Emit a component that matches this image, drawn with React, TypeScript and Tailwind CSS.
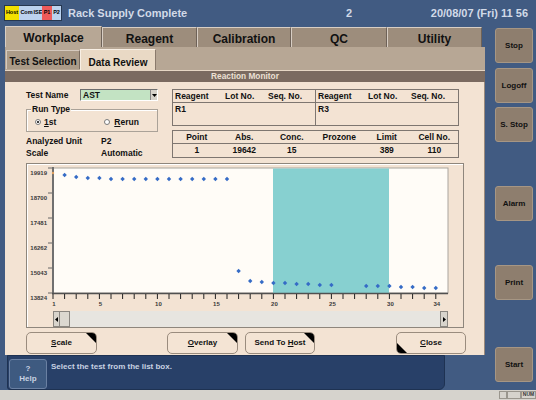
const POINTS: [number, number][] = [
  [2, 175], [3, 177], [4, 178], [5, 178], [6, 179], [7, 179], [8, 179], [9, 179], [10, 179],
  [11, 179], [12, 179], [13, 179], [14, 179], [15, 179], [16, 179],
  [17, 271], [18, 281], [19, 282], [20, 283], [21, 283], [22, 284], [23, 284], [24, 285], [25, 285],
  [28, 286], [29, 286], [30, 286], [31, 287], [32, 287], [33, 288], [34, 288],
];

const Y_TICKS: [string, number][] = [
  ["19919", 4], ["18700", 29], ["17481", 54], ["16262", 79], ["15043", 104], ["13824", 129],
];

const X_LABELS = [1, 5, 10, 15, 20, 25, 30, 34];

const TABS = [
  { label: "Workplace", w: "w-[97px]", active: true },
  { label: "Reagent", w: "w-[95px]", active: false },
  { label: "Calibration", w: "w-[94px]", active: false },
  { label: "QC", w: "w-[96px]", active: false },
  { label: "Utility", w: "w-[95px]", active: false },
];

function Chart() {
  const x = (n: number) => 26 + (n - 1) * 11.6;
  return (
    <svg width="436" height="146" className="block">
      <rect x="26" y="4" width="395" height="125" fill="#fffcf7" stroke="#aaa59e" strokeWidth="1" />
      <rect x="246" y="4.5" width="116" height="124.5" fill="#87d0d0" />
      <line x1="26" y1="3" x2="26" y2="130" stroke="#707070" strokeWidth="2" />
      <line x1="25" y1="129.5" x2="421" y2="129.5" stroke="#505050" strokeWidth="1.5" />
      {Y_TICKS.map(([l, y]) => (
        <g key={l}>
          <line x1="21" x2="25" y1={y} y2={y} stroke="#666" strokeWidth="1" />
          <text x="20" y={y + 7} textAnchor="end" fontSize="6" fill="#3a3a3a" fontFamily="Liberation Sans, Arial, sans-serif">
            {l}
          </text>
        </g>
      ))}
      {Array.from({ length: 34 }, (_, i) => (
        <line key={i} x1={x(i + 1)} x2={x(i + 1)} y1="130" y2="135" stroke="#222" strokeWidth="1" />
      ))}
      {X_LABELS.map((n) => (
        <text key={n} x={x(n) + 1} y="142" textAnchor="middle" fontSize="6" fill="#3a3a3a" fontFamily="Liberation Sans, Arial, sans-serif">
          {n}
        </text>
      ))}
      <circle cx="26" cy="9" r="1.2" fill="#e0a060" />
      {POINTS.map(([n, ay]) => {
        const cx = x(n);
        const cy = ay - 164;
        return (
          <path
            key={n}
            d={`M${cx} ${cy - 2.2}L${cx + 2.2} ${cy}L${cx} ${cy + 2.2}L${cx - 2.2} ${cy}Z`}
            fill="#356bc6"
          />
        );
      })}
    </svg>
  );
}

function Triangle({ corner }: { corner: "tr" | "bl" }) {
  return corner === "tr" ? (
    <svg width="10" height="10" className="absolute top-0 right-0">
      <polygon points="0,0 10,0 10,10" fill="#000" />
    </svg>
  ) : (
    <svg width="10" height="10" className="absolute bottom-0 left-0">
      <polygon points="0,0 0,10 10,10" fill="#000" />
    </svg>
  );
}

function PanelBtn({
  pre,
  u,
  post,
  w,
  corner,
  className,
}: {
  pre: string;
  u: string;
  post: string;
  w: string;
  corner: "tr" | "bl";
  className?: string;
}) {
  return (
    <div
      className={`relative overflow-hidden h-[22px] ${w} rounded-[5px] border border-[#9a8c7e] bg-[#f4e4d4] flex items-center justify-center text-[8px] font-bold text-[#111] ${className ?? ""}`}
    >
      <span>
        {pre}
        <span className="underline">{u}</span>
        {post}
      </span>
      <Triangle corner={corner} />
    </div>
  );
}

function SideBtn({ label, className }: { label: string; className: string }) {
  return (
    <div
      className={`h-[35px] w-[38px] rounded-[3px] border border-[#a69684] bg-[#8e7e6e] flex items-center justify-center text-[8px] font-bold text-[#111] ${className}`}
    >
      {label}
    </div>
  );
}

function Radio({ checked }: { checked?: boolean }) {
  return (
    <span className="w-[6px] h-[6px] rounded-full bg-white border border-[#7a7a7a] flex items-center justify-center">
      {checked && <span className="w-[2px] h-[2px] rounded-full bg-black" />}
    </span>
  );
}

export default function App() {
  return (
    <div className="w-[536px] h-[400px] overflow-hidden bg-[#415b82] flex flex-col font-['Liberation_Sans',Arial,sans-serif] text-[#111]">
      {/* Title bar */}
      <div className="h-[26px] shrink-0 flex items-center">
        <div className="ml-[4px] flex h-[16px] border border-[#26374f] text-[5.5px] font-bold leading-none text-black">
          <span className="w-[14px] bg-[#f2e000] flex items-center justify-center">Host</span>
          <span className="w-[15px] bg-[#bcd2ee] flex items-center justify-center">Com</span>
          <span className="w-[8px] bg-[#bcd2ee] flex items-center justify-center">ISE</span>
          <span className="w-[10px] bg-[#ee5a5a] flex items-center justify-center">P1</span>
          <span className="w-[9px] bg-[#bcd2ee] flex items-center justify-center">P2</span>
        </div>
        <span className="ml-[6px] w-[278px] text-[11px] font-bold text-[#d2dae8]">Rack Supply Complete</span>
        <span className="text-[11px] font-bold text-[#d2dae8]">2</span>
        <span className="ml-auto mr-[8px] text-[11px] font-bold text-[#d2dae8]">20/08/07 (Fri) 11 56</span>
      </div>

      <div className="flex-1 flex min-h-0">
        {/* Main column */}
        <div className="ml-[5px] w-[480px] flex flex-col">
          {/* Top tabs */}
          <div className="h-[21px] flex items-end">
            {TABS.map((t) => (
              <div
                key={t.label}
                className={`${t.w} flex items-center justify-center pt-[2px] text-[12px] font-bold text-[#111] border-t border-l border-[#d8cec4] border-r-[#6e6258] border-r ${
                  t.active ? "h-[21px] bg-[#b7a795]" : "h-[20px] bg-[#9d8d7c]"
                }`}
              >
                {t.label}
              </div>
            ))}
          </div>

          {/* Sub tabs */}
          <div className="h-[23px] bg-[#b7a795] flex items-end pl-[1px]">
            <div className="w-[74px] h-[19px] mb-[1px] bg-[#ab9b88] border-t border-l border-[#d6cabe] border-r border-r-[#7a6c60] flex items-center justify-center pt-[3px] text-[10px] font-bold">
              Test Selection
            </div>
            <div className="w-[76px] h-[21px] bg-[#e9d9c5] border-t border-l border-[#f8efe4] border-r border-r-[#8a7a6c] flex items-center justify-center pt-[4px] text-[10px] font-bold">
              Data Review
            </div>
          </div>

          {/* Reaction Monitor strip */}
          <div className="h-[12px] border-t border-[#e6d6c4] bg-[#7a6a60] flex items-center justify-center text-[8.3px] font-bold text-[#ece0d4] leading-none">
            Reaction Monitor
          </div>

          {/* Panel */}
          <div className="h-[273px] bg-[#f3e3d3] border-r border-[#9a8a7c] pl-[21px] pt-[7px] text-[8.5px] font-bold leading-none">
            <div className="flex h-[70px]">
              {/* Left column */}
              <div className="w-[132px] flex flex-col">
                <div className="h-[12px] flex items-center">
                  <span className="w-[54px]">Test Name</span>
                  <div className="w-[78px] h-[12px] flex bg-[#c3e3c3] border-t border-l border-[#6e6e6e] border-b border-r border-b-[#fff] border-r-[#fff]">
                    <span className="flex-1 pl-[2px] flex items-center">AST</span>
                    <span className="w-[7px] bg-[#d6d2ca] border-l border-[#888] flex items-center justify-center">
                      <svg width="5" height="3">
                        <polygon points="0,0 5,0 2.5,3" fill="#000" />
                      </svg>
                    </span>
                  </div>
                </div>
                <div className="relative mt-[8px] h-[23px] border border-[#aaa298] shadow-[inset_1px_1px_0_#fff]">
                  <span className="absolute -top-[5px] left-[4px] bg-[#f3e3d3] px-[1px] text-[8.5px]">Run Type</span>
                  <div className="pt-[7px] pl-[8px] flex items-center h-[10px] box-content">
                    <Radio checked />
                    <span className="ml-[3px]">
                      <span className="underline">1</span>st
                    </span>
                    <span className="ml-[48px]">
                      <Radio />
                    </span>
                    <span className="ml-[4px]">
                      <span className="underline">R</span>erun
                    </span>
                  </div>
                </div>
                <div className="mt-[3px] h-[12px] flex items-center">
                  <span className="w-[75px]">Analyzed Unit</span>
                  <span>P2</span>
                </div>
                <div className="h-[12px] flex items-center">
                  <span className="w-[75px]">Scale</span>
                  <span>Automatic</span>
                </div>
              </div>

              {/* Right tables */}
              <div className="ml-[14px] w-[287px] flex flex-col">
                <div className="h-[37px] border border-[#7e7670] flex">
                  {["R1", "R3"].map((r, i) => (
                    <div key={r} className={`flex flex-col ${i === 0 ? "w-[143px] border-r border-[#7e7670]" : "flex-1"}`}>
                      <div className="h-[13px] border-b border-[#7e7670] grid grid-cols-[50px_43px_1fr] items-center pl-[2px]">
                        <span>Reagent</span>
                        <span>Lot No.</span>
                        <span>Seq. No.</span>
                      </div>
                      <div className="pl-[2px] pt-[2px]">{r}</div>
                    </div>
                  ))}
                </div>
                <div className="mt-[4px] h-[28px] border border-[#7e7670] flex flex-col">
                  <div className="h-[13px] border-b border-[#7e7670] grid grid-cols-6 items-center text-center">
                    <span>Point</span>
                    <span>Abs.</span>
                    <span>Conc.</span>
                    <span>Prozone</span>
                    <span>Limit</span>
                    <span>Cell No.</span>
                  </div>
                  <div className="flex-1 grid grid-cols-6 items-center text-center">
                    <span>1</span>
                    <span>19642</span>
                    <span>15</span>
                    <span></span>
                    <span>389</span>
                    <span>110</span>
                  </div>
                </div>
              </div>
            </div>

            {/* Chart group */}
            <div className="mt-[4px] w-[438px] h-[165px] border border-[#8e867c] shadow-[inset_1px_1px_0_#fff]">
              <Chart />
              <div className="ml-[26px] mt-[1px] w-[395px] h-[16px] bg-[#e7e5e0] flex">
                <div className="w-[7px] bg-[#d8d4cc] border border-[#8a8680] flex items-center justify-center">
                  <svg width="3" height="5">
                    <polygon points="3,0 3,5 0,2.5" fill="#000" />
                  </svg>
                </div>
                <div className="w-[10px] bg-[#dcd8d0] border-t border-b border-r border-[#8a8680]" />
                <div className="flex-1" />
                <div className="w-[8px] bg-[#d8d4cc] border border-[#8a8680] flex items-center justify-center">
                  <svg width="3" height="5">
                    <polygon points="0,0 3,2.5 0,5" fill="#000" />
                  </svg>
                </div>
              </div>
            </div>

            {/* Buttons */}
            <div className="mt-[4px] flex">
              <PanelBtn pre="" u="S" post="cale" w="w-[71px]" corner="tr" />
              <PanelBtn pre="" u="O" post="verlay" w="w-[71px]" corner="tr" className="ml-[70px]" />
              <PanelBtn pre="Send To " u="H" post="ost" w="w-[70px]" corner="tr" className="ml-[7px]" />
              <PanelBtn pre="" u="C" post="lose" w="w-[70px]" corner="bl" className="ml-[81px]" />
            </div>
          </div>

          {/* Help bar */}
          <div className="h-[35px] flex">
            <div className="ml-[2px] w-[438px] h-[35px] bg-[#284068] rounded-br-[6px] rounded-bl-[3px] border border-[#1e3252] flex">
              <div className="ml-[1px] mt-[3px] w-[38px] h-[30px] rounded-[3px] bg-[#3e5a80] border border-[#6a80a2] flex flex-col items-center justify-center text-[8px] font-bold text-[#c8d2e2] leading-[10px]">
                <span>?</span>
                <span>Help</span>
              </div>
              <span className="ml-[4px] mt-[5px] text-[8px] font-bold text-[#c8d2e2]">Select the test from the list box.</span>
            </div>
          </div>
        </div>

        {/* Side buttons */}
        <div className="ml-[10px] flex flex-col">
          <SideBtn label="Stop" className="mt-[2px]" />
          <SideBtn label="Logoff" className="mt-[5px]" />
          <SideBtn label="S. Stop" className="mt-[4px]" />
          <SideBtn label="Alarm" className="mt-[44px]" />
          <SideBtn label="Print" className="mt-[44px]" />
          <SideBtn label="Start" className="mt-[47px]" />
        </div>
      </div>

      {/* Status bar */}
      <div className="h-[10px] shrink-0 bg-[#d6d3cd] flex items-center justify-end">
        <span className="w-[8px] h-[8px] border border-[#9a968e]" />
        <span className="w-[14px] h-[8px] border border-[#9a968e]" />
        <span className="w-[15px] h-[8px] border border-[#9a968e] text-[5px] font-bold flex items-center justify-center text-[#333]">
          NUM
        </span>
      </div>
    </div>
  );
}
